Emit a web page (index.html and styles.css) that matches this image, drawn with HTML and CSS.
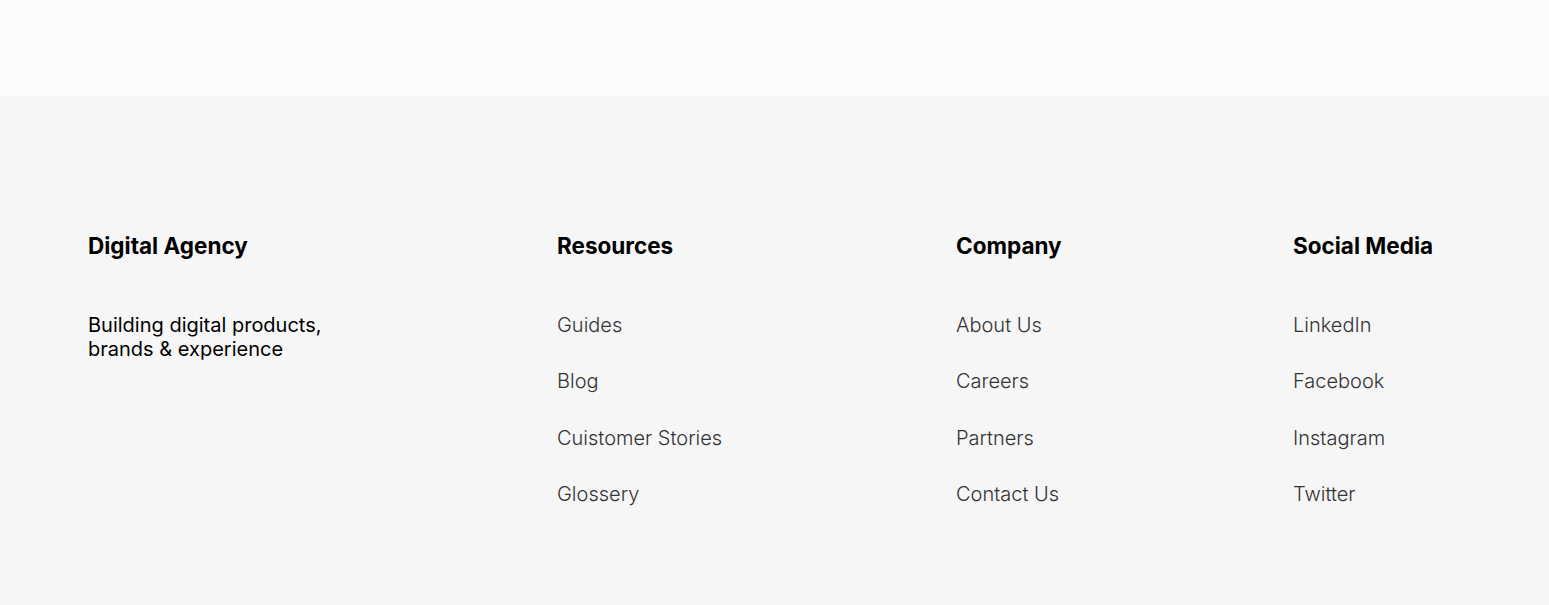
FILE: index.html
```html
<!DOCTYPE html>
<html lang="en">
<head>
<meta charset="utf-8">
<title>Footer</title>
<link rel="stylesheet" href="styles.css">
</head>
<body>
<div class="top"></div>
<footer class="footer">
  <div class="col col-brand">
    <h3 class="title">Digital Agency</h3>
    <p class="tagline">Building digital products,<br>brands &amp; experience</p>
  </div>
  <div class="col col-res">
    <h3 class="title">Resources</h3>
    <ul class="links">
      <li><a href="#">Guides</a></li>
      <li><a href="#">Blog</a></li>
      <li><a href="#">Cuistomer Stories</a></li>
      <li><a href="#">Glossery</a></li>
    </ul>
  </div>
  <div class="col col-comp">
    <h3 class="title">Company</h3>
    <ul class="links">
      <li><a href="#">About Us</a></li>
      <li><a href="#">Careers</a></li>
      <li><a href="#">Partners</a></li>
      <li><a href="#">Contact Us</a></li>
    </ul>
  </div>
  <div class="col col-social">
    <h3 class="title">Social Media</h3>
    <ul class="links">
      <li><a href="#">LinkedIn</a></li>
      <li><a href="#">Facebook</a></li>
      <li><a href="#">Instagram</a></li>
      <li><a href="#">Twitter</a></li>
    </ul>
  </div>
</footer>
</body>
</html>
```
FILE: styles.css
```css
html, body {
  margin: 0;
  padding: 0;
  background: #fcfcfc;
  font-family: Inter, "Noto Sans", sans-serif;
}
.top {
  height: 96px;
  background: #fcfcfc;
}
.footer {
  background: #f6f6f6;
  display: grid;
  grid-template-columns: 469px 399px 337px auto;
  padding: 135px 0 120px 88px;
  min-height: 420px;
  box-sizing: border-box;
}
.title {
  margin: 0;
  font-size: 22.5px;
  line-height: 30px;
  font-weight: 700;
  color: #000;
}
.tagline {
  margin: 52px 0 0;
  font-size: 20px;
  line-height: 24px;
  font-weight: 400;
  color: #000;
}
.links {
  list-style: none;
  margin: 52px 0 0;
  padding: 0;
  display: flex;
  flex-direction: column;
  gap: 32.3px;
}
.links li {
  font-size: 20px;
  line-height: 24px;
}
.links a {
  font-weight: 300;
  color: #333;
  text-decoration: none;
}
```
